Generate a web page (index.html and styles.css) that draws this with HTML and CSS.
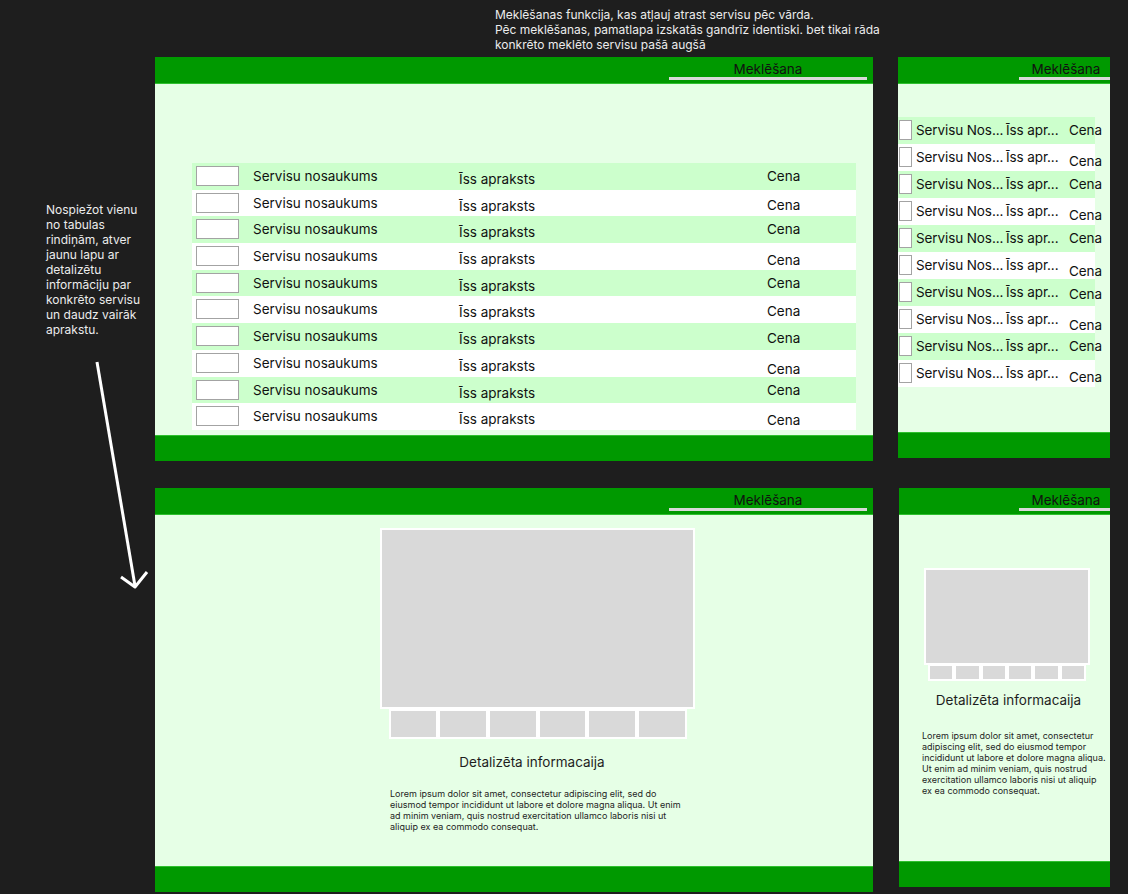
FILE: index.html
```html
<!DOCTYPE html>
<html>
<head>
  <title>Servisu katalogs – wireframe</title>
  <link rel="stylesheet" href="styles.css">
</head>
<body>
  <div class="canvas">

    <p class="note note-search">
      Meklēšanas funkcija, kas atļauj atrast servisu pēc vārda.<br>
      Pēc meklēšanas, pamatlapa izskatās gandrīz identiski. bet tikai rāda<br>
      konkrēto meklēto servisu pašā augšā
    </p>

    <p class="note note-detail">
      Nospiežot vienu<br>
      no tabulas<br>
      rindiņām, atver<br>
      jaunu lapu ar<br>
      detalizētu<br>
      informāciju par<br>
      konkrēto servisu<br>
      un daudz vairāk<br>
      aprakstu.
    </p>

    <svg class="arrow" width="60" height="240" viewBox="90 355 60 240">
      <path d="M97 362 L135 586" fill="none" stroke="#fff" stroke-width="3"/>
      <path d="M121 577 L135 587 L147 572" fill="none" stroke="#fff" stroke-width="3" stroke-linejoin="round"/>
    </svg>

    <!-- desktop: service list -->
    <div class="frame frame-list-desktop">
      <div class="frame-header">
        <div class="search">Meklēšana</div>
      </div>
      <div class="frame-body">
        <div class="table">
          <div class="row">
            <span class="check"></span><span class="cell-name">Servisu nosaukums</span><span class="cell-desc">Īss apraksts</span><span class="cell-price">Cena</span>
          </div>
          <div class="row">
            <span class="check"></span><span class="cell-name">Servisu nosaukums</span><span class="cell-desc">Īss apraksts</span><span class="cell-price nudge-1">Cena</span>
          </div>
          <div class="row">
            <span class="check"></span><span class="cell-name">Servisu nosaukums</span><span class="cell-desc">Īss apraksts</span><span class="cell-price">Cena</span>
          </div>
          <div class="row">
            <span class="check"></span><span class="cell-name">Servisu nosaukums</span><span class="cell-desc">Īss apraksts</span><span class="cell-price nudge-2">Cena</span>
          </div>
          <div class="row">
            <span class="check"></span><span class="cell-name">Servisu nosaukums</span><span class="cell-desc">Īss apraksts</span><span class="cell-price">Cena</span>
          </div>
          <div class="row">
            <span class="check"></span><span class="cell-name">Servisu nosaukums</span><span class="cell-desc">Īss apraksts</span><span class="cell-price nudge-1">Cena</span>
          </div>
          <div class="row">
            <span class="check"></span><span class="cell-name">Servisu nosaukums</span><span class="cell-desc">Īss apraksts</span><span class="cell-price nudge-1">Cena</span>
          </div>
          <div class="row">
            <span class="check"></span><span class="cell-name">Servisu nosaukums</span><span class="cell-desc">Īss apraksts</span><span class="cell-price nudge-3">Cena</span>
          </div>
          <div class="row">
            <span class="check"></span><span class="cell-name">Servisu nosaukums</span><span class="cell-desc">Īss apraksts</span><span class="cell-price">Cena</span>
          </div>
          <div class="row">
            <span class="check"></span><span class="cell-name">Servisu nosaukums</span><span class="cell-desc">Īss apraksts</span><span class="cell-price nudge-2">Cena</span>
          </div>
        </div>
      </div>
      <div class="frame-footer"></div>
    </div>

    <!-- mobile: service list -->
    <div class="frame frame-list-mobile">
      <div class="frame-header">
        <div class="search">Meklēšana</div>
      </div>
      <div class="frame-body">
        <div class="table">
          <div class="row"><span class="check"></span><span class="cell-name">Servisu Nos...</span><span class="cell-desc">Īss apr...</span><span class="cell-price">Cena</span></div>
          <div class="row"><span class="check"></span><span class="cell-name">Servisu Nos...</span><span class="cell-desc">Īss apr...</span><span class="cell-price nudge-2">Cena</span></div>
          <div class="row"><span class="check"></span><span class="cell-name">Servisu Nos...</span><span class="cell-desc">Īss apr...</span><span class="cell-price">Cena</span></div>
          <div class="row"><span class="check"></span><span class="cell-name">Servisu Nos...</span><span class="cell-desc">Īss apr...</span><span class="cell-price nudge-2">Cena</span></div>
          <div class="row"><span class="check"></span><span class="cell-name">Servisu Nos...</span><span class="cell-desc">Īss apr...</span><span class="cell-price">Cena</span></div>
          <div class="row"><span class="check"></span><span class="cell-name">Servisu Nos...</span><span class="cell-desc">Īss apr...</span><span class="cell-price nudge-3">Cena</span></div>
          <div class="row"><span class="check"></span><span class="cell-name">Servisu Nos...</span><span class="cell-desc">Īss apr...</span><span class="cell-price nudge-1">Cena</span></div>
          <div class="row"><span class="check"></span><span class="cell-name">Servisu Nos...</span><span class="cell-desc">Īss apr...</span><span class="cell-price nudge-3">Cena</span></div>
          <div class="row"><span class="check"></span><span class="cell-name">Servisu Nos...</span><span class="cell-desc">Īss apr...</span><span class="cell-price">Cena</span></div>
          <div class="row"><span class="check"></span><span class="cell-name">Servisu Nos...</span><span class="cell-desc">Īss apr...</span><span class="cell-price nudge-2">Cena</span></div>
        </div>
      </div>
      <div class="frame-footer"></div>
    </div>

    <!-- desktop: service detail -->
    <div class="frame frame-detail-desktop">
      <div class="frame-header">
        <div class="search">Meklēšana</div>
      </div>
      <div class="frame-body">
        <div class="detail">
          <div class="gallery-main"></div>
          <div class="gallery-thumbs">
            <span class="thumb"></span><span class="thumb"></span><span class="thumb"></span>
            <span class="thumb"></span><span class="thumb"></span><span class="thumb"></span>
          </div>
          <h2 class="detail-title">Detalizēta informacaija</h2>
          <p class="detail-text">Lorem ipsum dolor sit amet, consectetur adipiscing elit, sed do eiusmod tempor incididunt ut labore et dolore magna aliqua. Ut enim ad minim veniam, quis nostrud exercitation ullamco laboris nisi ut aliquip ex ea commodo consequat.</p>
        </div>
      </div>
      <div class="frame-footer"></div>
    </div>

    <!-- mobile: service detail -->
    <div class="frame frame-detail-mobile">
      <div class="frame-header">
        <div class="search">Meklēšana</div>
      </div>
      <div class="frame-body">
        <div class="detail">
          <div class="gallery-main"></div>
          <div class="gallery-thumbs">
            <span class="thumb"></span><span class="thumb"></span><span class="thumb"></span>
            <span class="thumb"></span><span class="thumb"></span><span class="thumb"></span>
          </div>
          <h2 class="detail-title">Detalizēta informacaija</h2>
          <p class="detail-text">Lorem ipsum dolor sit amet, consectetur adipiscing elit, sed do eiusmod tempor incididunt ut labore et dolore magna aliqua. Ut enim ad minim veniam, quis nostrud exercitation ullamco laboris nisi ut aliquip ex ea commodo consequat.</p>
        </div>
      </div>
      <div class="frame-footer"></div>
    </div>

  </div>
</body>
</html>
```

FILE: styles.css
```css
* {
  box-sizing: border-box;
}

body {
  margin: 0;
  background: #1e1e1e;
  font-family: Inter, "Noto Sans", sans-serif;
  color: #1e1e1e;
}

.canvas {
  position: relative;
  width: 1128px;
  height: 894px;
  overflow: hidden;
}

/* sticky notes on the board */
.note {
  position: absolute;
  margin: 0;
  font-size: 12px;
  line-height: 15px;
  color: #ececec;
  white-space: nowrap;
}

.note-search {
  left: 495px;
  top: 7px;
}

.note-detail {
  left: 46px;
  top: 202px;
}

.arrow {
  position: absolute;
  left: 90px;
  top: 355px;
}

/* frames */
.frame {
  position: absolute;
  display: flex;
  flex-direction: column;
  background: #e6ffe6;
}

.frame-list-desktop {
  left: 155px;
  top: 57px;
  width: 718px;
  height: 404px;
}

.frame-list-mobile {
  left: 898px;
  top: 57px;
  width: 212px;
  height: 401px;
}

.frame-detail-desktop {
  left: 155px;
  top: 488px;
  width: 718px;
  height: 404px;
}

.frame-detail-mobile {
  left: 899px;
  top: 488px;
  width: 211px;
  height: 399px;
}

.frame-header {
  height: 27px;
  flex-shrink: 0;
  display: flex;
  justify-content: flex-end;
  background: #009900;
  border-bottom: 1px solid #2fc02f;
}

.search {
  width: 198px;
  height: 23px;
  margin-right: 6px;
  padding-top: 4px;
  font-size: 13.5px;
  line-height: 16px;
  text-align: center;
  color: #111;
  border-bottom: 3px solid #d9d9d9;
}

.frame-list-mobile .search,
.frame-detail-mobile .search {
  width: 91px;
  margin-right: 0;
  padding-left: 3px;
}

.frame-body {
  flex: 1;
}

.frame-footer {
  height: 26px;
  flex-shrink: 0;
  background: #009900;
  border-top: 1px solid #2fc02f;
}

/* service table */
.table {
  display: flex;
  flex-direction: column;
}

.frame-list-desktop .table {
  width: 664px;
  margin: 79px 0 0 37px;
}

.frame-list-mobile .table {
  width: 197px;
  margin-top: 33px;
}

.row {
  display: flex;
  align-items: flex-start;
  height: 26.7px;
  background: #fff;
  font-size: 13.5px;
  line-height: 16px;
  color: #111;
  white-space: nowrap;
}

.row:nth-child(odd) {
  background: #ccffcc;
}

.row > span {
  flex-shrink: 0;
}

.check {
  width: 43px;
  height: 20px;
  margin: 3px 14px 0 4px;
  background: #fff;
  border: 1px solid #a3a3a3;
}

.cell-name {
  width: 206px;
  padding-top: 5px;
}

.cell-desc {
  width: 308px;
  padding-top: 8px;
}

.cell-price {
  padding-top: 5px;
}

.nudge-1 { padding-top: 7px; }
.nudge-2 { padding-top: 9px; }
.nudge-3 { padding-top: 11px; }

.frame-list-mobile .row {
  height: 27px;
  letter-spacing: -0.1px;
}

.frame-list-mobile .check {
  width: 13px;
  margin: 3px 4px 0 1px;
}

.frame-list-mobile .cell-name {
  width: 90px;
  padding-top: 5px;
}

.frame-list-mobile .cell-desc {
  width: 63px;
  padding-top: 5px;
}

/* detail page */
.detail {
  display: flex;
  flex-direction: column;
  align-items: center;
}

.frame-detail-desktop .detail {
  width: 315px;
  margin: 13px 0 0 225px;
}

.frame-detail-mobile .detail {
  width: 166px;
  margin: 53px 0 0 25px;
}

.gallery-main {
  width: 100%;
  height: 181px;
  background: #d9d9d9;
  border: 2px solid #fff;
}

.gallery-thumbs {
  display: flex;
  width: 298px;
}

.thumb {
  flex: 1;
  height: 30px;
  background: #d9d9d9;
  border: 2px solid #fff;
}

.detail-title {
  margin: 14px 11px 0 0;
  font-size: 13.5px;
  font-weight: 400;
  line-height: 18px;
  color: #1e1e1e;
}

.detail-text {
  align-self: stretch;
  width: 296px;
  margin: 17px 0 0 10px;
  font-size: 9px;
  line-height: 11px;
  color: #1e1e1e;
}

.frame-detail-mobile .gallery-main {
  height: 97px;
}

.frame-detail-mobile .gallery-thumbs {
  width: 158px;
  margin-top: -1px;
}

.frame-detail-mobile .thumb {
  height: 17px;
}

.frame-detail-mobile .detail-title {
  margin: 10px 0 0 3px;
}

.frame-detail-mobile .detail-text {
  width: 185px;
  margin: 21px 0 0 -2px;
}
```
